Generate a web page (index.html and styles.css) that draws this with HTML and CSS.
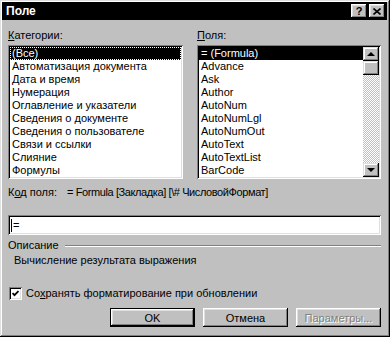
FILE: index.html
```html
<!doctype html>
<html>
  <head>
    <title>Поле</title>
    <meta charset="utf-8">
    <link rel="stylesheet" href="styles.css">
  </head>
  <body>
    <div class="dialog">
      <div class="titlebar">
        <span class="title">Поле</span>
        <span class="tbtn help">?</span>
        <span class="tbtn close">
          <svg width="8" height="7" viewBox="0 0 8 7">
            <path d="M0.5 0.5 L7.5 6.5 M7.5 0.5 L0.5 6.5" stroke="#000" stroke-width="1.6" fill="none"/>
          </svg>
        </span>
      </div>
      <div class="content">
        <div class="lists">
          <div class="col col-cat">
            <div class="label"><u>К</u>атегории:</div>
            <div class="listbox">
              <div class="item selected focus">(Все)</div>
              <div class="item">Автоматизация документа</div>
              <div class="item">Дата и время</div>
              <div class="item">Нумерация</div>
              <div class="item">Оглавление и указатели</div>
              <div class="item">Сведения о документе</div>
              <div class="item">Сведения о пользователе</div>
              <div class="item">Связи и ссылки</div>
              <div class="item">Слияние</div>
              <div class="item">Формулы</div>
            </div>
          </div>
          <div class="col col-fields">
            <div class="label"><u>П</u>оля:</div>
            <div class="listbox scrolled">
              <div class="items">
                <div class="item selected">= (Formula)</div>
                <div class="item">Advance</div>
                <div class="item">Ask</div>
                <div class="item">Author</div>
                <div class="item">AutoNum</div>
                <div class="item">AutoNumLgl</div>
                <div class="item">AutoNumOut</div>
                <div class="item">AutoText</div>
                <div class="item">AutoTextList</div>
                <div class="item">BarCode</div>
              </div>
              <div class="scrollbar">
                <div class="sb-btn"><span class="arrow up"></span></div>
                <div class="sb-btn thumb"></div>
                <div class="sb-track"></div>
                <div class="sb-btn"><span class="arrow down"></span></div>
              </div>
            </div>
          </div>
        </div>

        <div class="code-row">
          <span class="code-label">К<u>о</u>д поля:</span>
          <span class="code-value">= Formula [Закладка] [\# ЧисловойФормат]</span>
        </div>

        <div class="field"><span class="caret"></span>=</div>

        <div class="group">
          <span>Описание</span>
          <span class="etch"></span>
        </div>
        <div class="desc">Вычисление результата выражения</div>

        <div class="check">
          <span class="box">
            <svg width="7" height="7" viewBox="0 0 7 7">
              <path d="M0.5 3 L2.5 5.2 L6.5 1" stroke="#000" stroke-width="1.8" fill="none"/>
            </svg>
          </span>
          <span>Со<u>х</u>ранять форматирование при обновлении</span>
        </div>

        <div class="buttons">
          <button class="btn default">OK</button>
          <button class="btn">Отмена</button>
          <button class="btn" disabled>Параметры...</button>
        </div>
      </div>
    </div>
  </body>
</html>
```

FILE: styles.css
```css
html, body {
  margin: 0;
  padding: 0;
}
body {
  font-family: "Liberation Sans", Arial, sans-serif;
  font-size: 11px;
  color: #000;
  background: #c0c0c0;
}
.dialog {
  box-sizing: border-box;
  width: 390px;
  height: 337px;
  padding: 2px 3px 3px 2px;
  background: #c0c0c0;
  box-shadow: inset -1px -1px #000, inset 1px 1px #dfdfdf,
              inset -2px -2px #808080, inset 2px 2px #fff;
}

/* title bar */
.titlebar {
  height: 18px;
  display: flex;
  align-items: center;
  padding: 0 2px 0 4px;
  background: #000;
  color: #fff;
}
.title {
  flex: 1;
  font-weight: bold;
  font-size: 12px;
}
.tbtn {
  width: 16px;
  height: 14px;
  margin-left: 2px;
  display: flex;
  align-items: center;
  justify-content: center;
  background: #c0c0c0;
  color: #000;
  font-weight: bold;
  font-size: 11px;
  box-shadow: inset -1px -1px #000, inset 1px 1px #fff,
              inset -2px -2px #808080, inset 2px 2px #dfdfdf;
}

/* body */
.content {
  padding: 9px 6px 0 6px;
}
.label {
  height: 13px;
  line-height: 13px;
  margin-bottom: 3px;
}
.lists {
  display: flex;
  gap: 14px;
}
.col-cat {
  width: 175px;
}
.col-fields {
  flex: 1;
}
.listbox {
  box-sizing: border-box;
  height: 134px;
  padding: 2px;
  background: #fff;
  overflow: hidden;
  box-shadow: inset 1px 1px #808080, inset -1px -1px #fff,
              inset 2px 2px #000, inset -2px -2px #dfdfdf;
}
.listbox.scrolled {
  display: flex;
}
.items {
  flex: 1;
}
.item {
  height: 13px;
  line-height: 13px;
  padding-left: 2px;
  white-space: nowrap;
}
.item.selected {
  background: #000;
  color: #fff;
}
.item.focus {
  outline: 1px dotted #fff;
  outline-offset: -1px;
}

/* scrollbar */
.scrollbar {
  width: 16px;
  display: flex;
  flex-direction: column;
}
.sb-btn {
  height: 14px;
  display: flex;
  align-items: center;
  justify-content: center;
  background: #c0c0c0;
  box-shadow: inset -1px -1px #000, inset 1px 1px #dfdfdf,
              inset -2px -2px #808080, inset 2px 2px #fff;
}
.sb-track {
  flex: 1;
  background: repeating-conic-gradient(#c0c0c0 0 25%, #fff 0 50%) 0 0 / 2px 2px;
}
.arrow {
  width: 0;
  height: 0;
  border-left: 4px solid transparent;
  border-right: 4px solid transparent;
}
.arrow.up {
  border-bottom: 4px solid #000;
}
.arrow.down {
  border-top: 4px solid #000;
}

/* field code */
.code-row {
  display: flex;
  margin-top: 7px;
  line-height: 13px;
}
.code-label {
  width: 59px;
}
.code-value {
  letter-spacing: -0.4px;
}
.field {
  box-sizing: border-box;
  height: 20px;
  margin-top: 16px;
  padding-left: 3px;
  display: flex;
  align-items: center;
  background: #fff;
  box-shadow: inset 1px 1px #808080, inset -1px -1px #fff,
              inset 2px 2px #000, inset -2px -2px #dfdfdf;
}
.caret {
  width: 1px;
  height: 13px;
  margin-right: 1px;
  background: #000;
}

/* description */
.group {
  display: flex;
  align-items: center;
  margin-top: 4px;
  line-height: 13px;
}
.etch {
  flex: 1;
  margin-left: 6px;
  border-top: 1px solid #808080;
  border-bottom: 1px solid #fff;
}
.desc {
  margin-top: 2px;
  padding-left: 6px;
  line-height: 13px;
}

/* checkbox */
.check {
  display: flex;
  align-items: center;
  gap: 4px;
  margin-top: 20px;
  padding-left: 1px;
  line-height: 13px;
}
.box {
  width: 13px;
  height: 13px;
  display: flex;
  align-items: center;
  justify-content: center;
  background: #fff;
  box-shadow: inset 1px 1px #808080, inset -1px -1px #fff,
              inset 2px 2px #000, inset -2px -2px #dfdfdf;
}

/* buttons */
.buttons {
  display: flex;
  justify-content: flex-end;
  gap: 8px;
  margin-top: 8px;
}
.btn {
  box-sizing: border-box;
  width: 85px;
  height: 19px;
  padding: 0;
  border: 0;
  font: inherit;
  color: #000;
  background: #c0c0c0;
  box-shadow: inset -1px -1px #000, inset 1px 1px #fff,
              inset -2px -2px #808080, inset 2px 2px #dfdfdf;
}
.btn.default {
  border: 1px solid #000;
}
.btn:disabled {
  color: #808080;
  text-shadow: 1px 1px #fff;
}
```
